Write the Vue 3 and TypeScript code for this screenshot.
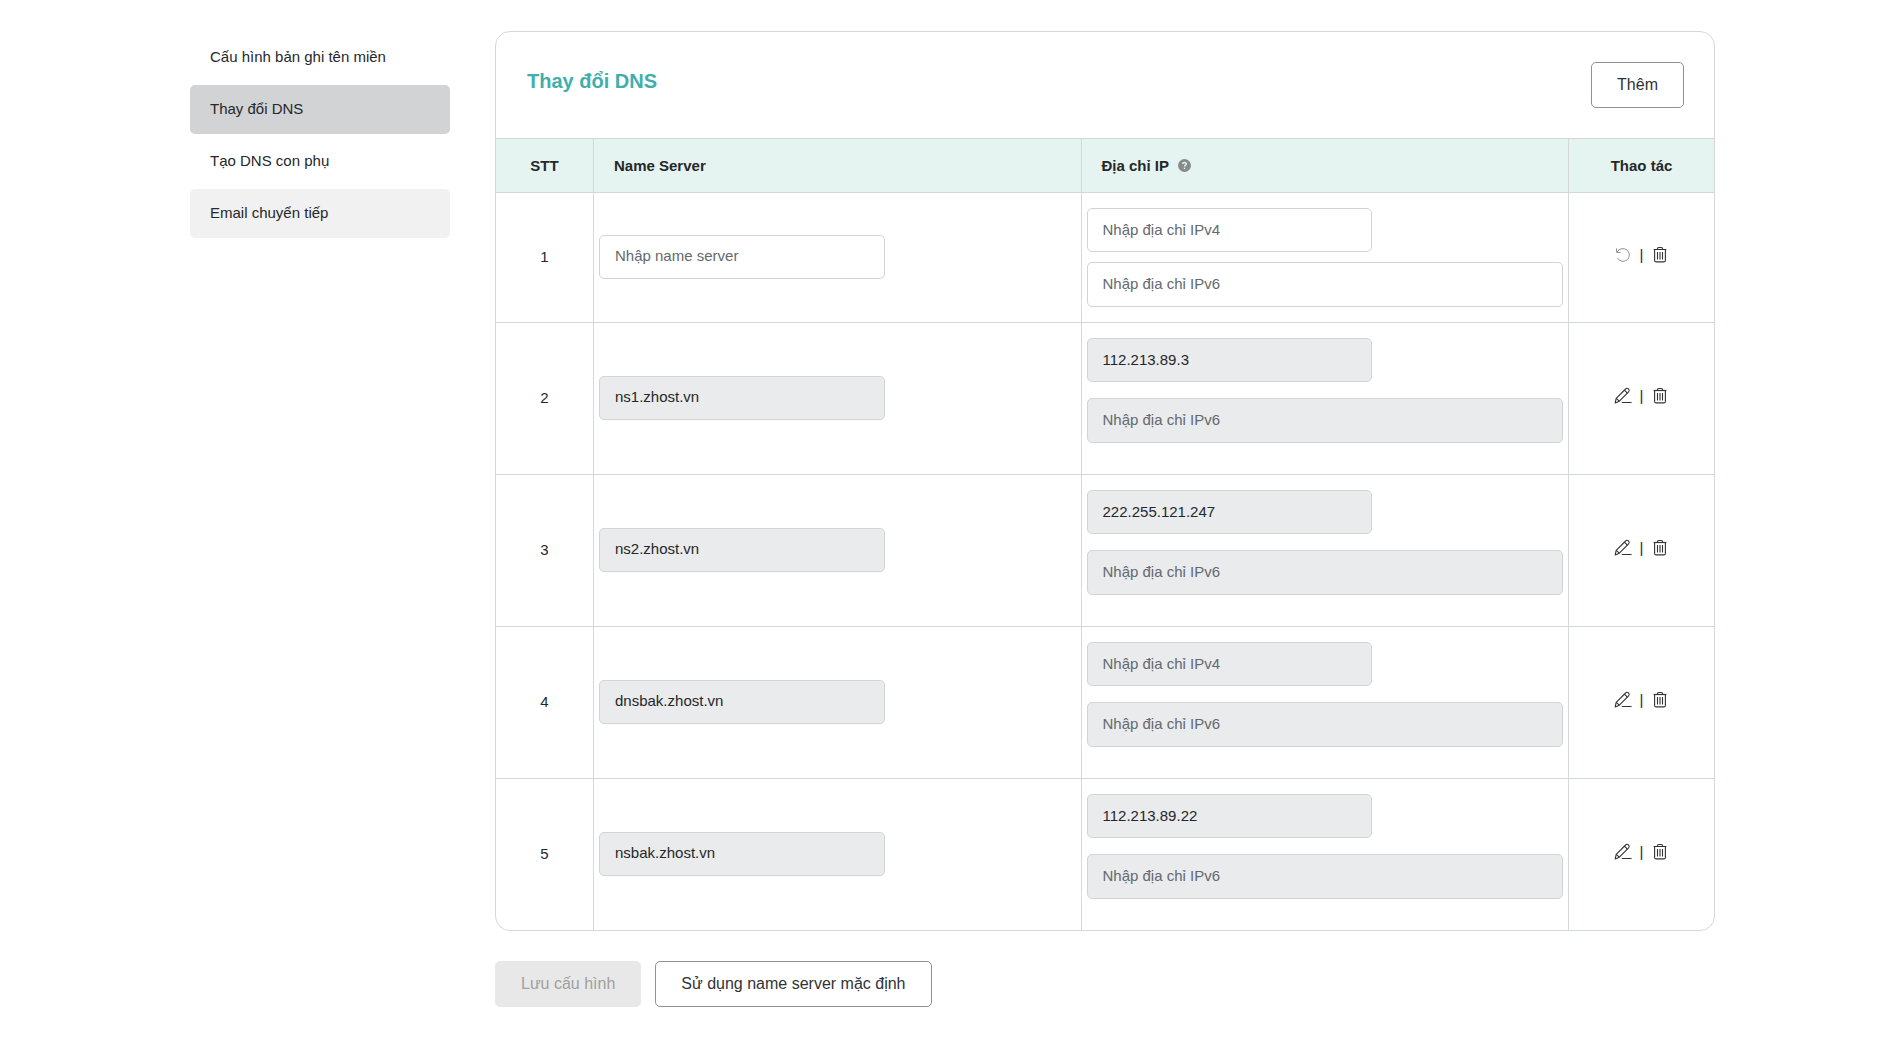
<script setup lang="ts">
import { ref } from 'vue'

interface MenuItem {
  label: string
  state?: 'active' | 'hover'
}

interface ServerRow {
  name: string
  ipv4: string
  ipv6: string
  editing: boolean
}

const menu: MenuItem[] = [
  { label: 'Cấu hình bản ghi tên miền' },
  { label: 'Thay đổi DNS', state: 'active' },
  { label: 'Tạo DNS con phụ' },
  { label: 'Email chuyển tiếp', state: 'hover' },
]

const rows = ref<ServerRow[]>([
  { name: '', ipv4: '', ipv6: '', editing: true },
  { name: 'ns1.zhost.vn', ipv4: '112.213.89.3', ipv6: '', editing: false },
  { name: 'ns2.zhost.vn', ipv4: '222.255.121.247', ipv6: '', editing: false },
  { name: 'dnsbak.zhost.vn', ipv4: '', ipv6: '', editing: false },
  { name: 'nsbak.zhost.vn', ipv4: '112.213.89.22', ipv6: '', editing: false },
])

function addRow() {
  rows.value.unshift({ name: '', ipv4: '', ipv6: '', editing: true })
}

function removeRow(index: number) {
  rows.value.splice(index, 1)
}

function toggleRow(row: ServerRow) {
  row.editing = !row.editing
}
</script>

<template>
  <div class="page">
    <nav class="sidebar">
      <a v-for="item in menu" :key="item.label" href="#" class="menu-item" :class="item.state">{{ item.label }}</a>
    </nav>

    <main class="content">
      <section class="card">
        <header class="card-head">
          <h1 class="title">Thay đổi DNS</h1>
          <button type="button" class="btn" @click="addRow">Thêm</button>
        </header>

        <table class="servers">
          <colgroup>
            <col class="col-index" />
            <col />
            <col />
            <col class="col-actions" />
          </colgroup>
          <thead>
            <tr>
              <th class="center">STT</th>
              <th>Name Server</th>
              <th>
                <span class="with-help">
                  Địa chỉ IP
                  <svg class="help" viewBox="0 0 13 13" aria-hidden="true">
                    <circle cx="6.5" cy="6.5" r="6.5" fill="#878c8a" />
                    <path d="M4.7 5.1C4.7 3 8.3 3 8.3 5C8.3 6.3 6.5 6.1 6.5 7.6" fill="none" stroke="#e5f4f0" stroke-width="1.4" />
                    <rect x="5.8" y="8.6" width="1.4" height="1.4" fill="#e5f4f0" />
                  </svg>
                </span>
              </th>
              <th class="center">Thao tác</th>
            </tr>
          </thead>
          <tbody>
            <tr v-for="(row, i) in rows" :key="i">
              <td class="center">{{ i + 1 }}</td>
              <td>
                <input v-model="row.name" class="field short" type="text" placeholder="Nhập name server" aria-label="Name Server" :disabled="!row.editing" />
              </td>
              <td class="ip-cell">
                <div class="ips" :class="{ locked: !row.editing }">
                  <input v-model="row.ipv4" class="field short" type="text" placeholder="Nhập địa chỉ IPv4" aria-label="IPv4" :disabled="!row.editing" />
                  <input v-model="row.ipv6" class="field tall" type="text" placeholder="Nhập địa chỉ IPv6" aria-label="IPv6" :disabled="!row.editing" />
                </div>
              </td>
              <td>
                <div class="actions">
                  <button type="button" class="icon-btn" :aria-label="row.editing ? 'Hoàn tác' : 'Sửa'" @click="toggleRow(row)">
                    <svg v-if="row.editing" viewBox="0 0 18 18" fill="none" stroke="#8f8f8f" stroke-width="1">
                      <path d="M2.6 2.4V6.4H6.6" />
                      <path d="M2.8 6.2C4 3.9 6.4 2.6 9 2.7A6.3 6.3 0 1 1 3.6 12.2" />
                    </svg>
                    <svg v-else viewBox="0 0 18 18" fill="none" stroke="#333" stroke-width="1.1" stroke-linejoin="round">
                      <path d="M1.2 15.9L2.2 11.4L11.6 2C12.4 1.1 13.6 1.1 14.5 1.9C15.4 2.8 15.4 4 14.6 4.9L5.3 14.2L1.2 15.9Z" />
                      <path d="M10.4 3.2L13.4 6.1M2.2 11.4L5.3 14.2M7.8 15.5H17.6" />
                    </svg>
                  </button>
                  <span class="bar">|</span>
                  <button type="button" class="icon-btn" aria-label="Xóa" @click="removeRow(i)">
                    <svg viewBox="0 0 18 18" fill="none" stroke="#333" stroke-width="1.1">
                      <path d="M2.6 3.5H15.4" stroke-width="1.2" />
                      <path d="M6.3 3.2C6.3 2 6.8 1.5 7.8 1.5H10.2C11.2 1.5 11.7 2 11.7 3.2" />
                      <path d="M3.6 3.5V14.4Q3.6 15.9 5.1 15.9H12.9Q14.4 15.9 14.4 14.4V3.5" />
                      <path d="M6.5 6V13.5M9 6V13.5M11.5 6V13.5" />
                    </svg>
                  </button>
                </div>
              </td>
            </tr>
          </tbody>
        </table>
      </section>

      <div class="footer">
        <button type="button" class="btn save" disabled>Lưu cấu hình</button>
        <button type="button" class="btn">Sử dụng name server mặc định</button>
      </div>
    </main>
  </div>
</template>

<style>
body {
  margin: 0;
  background: #fff;
}
</style>

<style scoped>
.page {
  display: flex;
  gap: 45px;
  padding: 31px 188px 50px 190px;
  font-family: "Liberation Sans", Arial, sans-serif;
  font-size: 15px;
  line-height: 20px;
  color: #25282a;
}

.page * {
  box-sizing: border-box;
}

.sidebar {
  display: flex;
  flex: 0 0 260px;
  flex-direction: column;
  gap: 3px;
  padding-top: 2px;
}

.menu-item {
  padding: 14px 20px 15px;
  border-radius: 5px;
  color: #25282a;
  text-decoration: none;
}

.menu-item.active {
  background: #d1d3d4;
}

.menu-item.hover {
  background: #f1f1f1;
}

.content {
  flex: 1;
  min-width: 0;
}

.card {
  overflow: hidden;
  border: 1px solid #d5d8d8;
  border-radius: 15px;
}

.card-head {
  display: flex;
  justify-content: space-between;
  align-items: flex-start;
  padding: 30px 30px 30px 31px;
}

.title {
  margin: 0;
  font-size: 20px;
  line-height: 38px;
  font-weight: 700;
  color: #40afac;
}

.btn {
  height: 46px;
  padding: 0 25px;
  border: 1px solid #8e9192;
  border-radius: 5px;
  background: #fff;
  color: #303335;
  font: 16px/20px "Liberation Sans", Arial, sans-serif;
}

.btn.save {
  border-color: #e8e8e8;
  background: #e8e8e8;
  color: #a0a0a0;
}

.servers {
  width: 100%;
  table-layout: fixed;
  border-collapse: separate;
  border-spacing: 0;
}

.col-index {
  width: 98px;
}

.col-actions {
  width: 145px;
}

.servers th {
  height: 55px;
  padding: 0 20px;
  border: solid #d0d9d7;
  border-width: 1px 1px 1px 0;
  background: #e5f4f0;
  text-align: left;
  font-weight: 700;
}

.servers td {
  padding: 14px 5px 16px;
  border: solid #d5d8d8;
  border-width: 0 1px 1px 0;
}

.servers .ip-cell {
  padding: 15px 5px;
}

.servers th:last-child,
.servers td:last-child {
  border-right: 0;
}

.servers tbody tr:last-child td {
  border-bottom: 0;
}

.servers .center {
  text-align: center;
}

.with-help {
  display: flex;
  align-items: center;
  gap: 9px;
}

.help {
  width: 13px;
  height: 13px;
}

.field {
  display: block;
  width: 100%;
  height: 44px;
  padding: 0 15px 2px;
  border: 1px solid #d1d4d5;
  border-radius: 5px;
  background: #fff;
  color: #25282a;
  font: 15px/20px "Liberation Sans", Arial, sans-serif;
}

.field.short {
  width: 60%;
}

.field.tall {
  height: 45px;
}

.field::placeholder {
  color: #64696d;
  opacity: 1;
}

.field:disabled {
  background: #e9ebed;
}

.ips {
  display: flex;
  flex-direction: column;
  gap: 10px;
}

.ips.locked {
  gap: 16px;
  padding-bottom: 16px;
}

.actions {
  display: flex;
  justify-content: center;
  align-items: center;
  gap: 8px;
  padding-bottom: 4px;
}

.icon-btn {
  display: block;
  width: 18px;
  height: 18px;
  padding: 0;
  border: 0;
  background: none;
}

.icon-btn svg {
  display: block;
  width: 18px;
  height: 18px;
}

.footer {
  display: flex;
  gap: 14px;
  margin-top: 30px;
}
</style>
